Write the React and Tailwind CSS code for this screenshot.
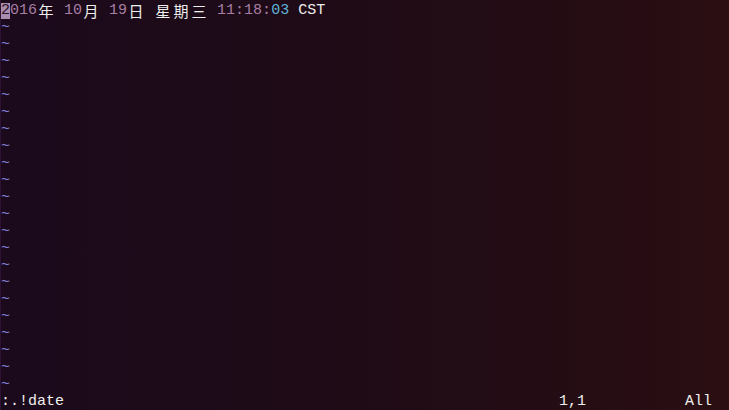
import React from "react";

const mono = { fontFamily: '"Liberation Mono", "DejaVu Sans Mono", monospace' };

// a double-width cell for CJK glyphs so the grid stays at 9px per column
const Wide = ({ ch }) => (
  <span
    className="inline-block w-[18px] text-center text-[#eeeeec] text-[15px] leading-[17px]"
    style={{ fontFamily: '"Noto Sans CJK SC", "Noto Sans CJK JP", sans-serif' }}
  >
    {ch}
  </span>
);

const Num = ({ children, cyan }) => (
  <span className={cyan ? "text-[#5fb3d6]" : "text-[#a87ea2]"}>{children}</span>
);

export default function App() {
  const tildes = Array.from({ length: 22 });

  return (
    <div
      className="w-[729px] h-[410px] overflow-hidden pt-[2px] bg-gradient-to-r from-[#1b0a1c] via-[#1f0b16] to-[#2a0e12] border-l border-[#2e1233] text-[15px] leading-[17px] whitespace-pre flex flex-col"
      style={mono}
    >
      {/* line 1: output of !date */}
      <div className="h-[17px] flex items-center text-[#eeeeec]">
        <span className="inline-block w-[9px] h-[16px] bg-[#a98cad] text-[#2a0f25] leading-[16px]">2</span>
        <Num>016</Num>
        <Wide ch="年" />
        <span> </span>
        <Num>10</Num>
        <Wide ch="月" />
        <span> </span>
        <Num>19</Num>
        <Wide ch="日" />
        <span> </span>
        <Wide ch="星" />
        <Wide ch="期" />
        <Wide ch="三" />
        <span> </span>
        <Num>11:18:</Num>
        <Num cyan>03</Num>
        <span> CST</span>
      </div>

      {/* empty buffer lines */}
      {tildes.map((_, i) => (
        <div key={i} className="h-[17px] text-[#8583dc]">~</div>
      ))}

      {/* command line + ruler */}
      <div className="h-[17px] text-[#eeeeec]">
        {":.!date" + " ".repeat(55) + "1,1" + " ".repeat(11) + "All"}
      </div>
    </div>
  );
}
